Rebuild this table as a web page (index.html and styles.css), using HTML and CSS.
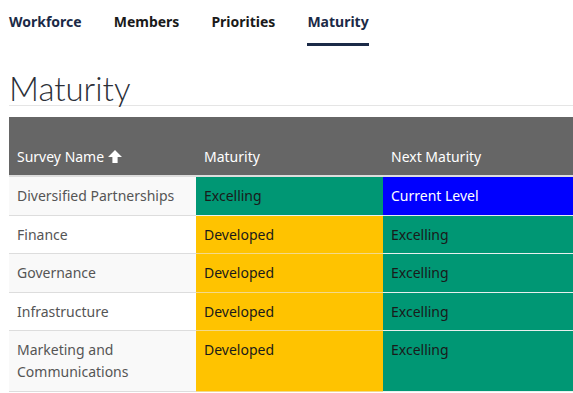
FILE: index.html
```html
<!DOCTYPE html>
<html lang="en">
<head>
    <meta charset="UTF-8">
    <meta name="viewport" content="width=device-width, initial-scale=1.0">
    <title>Maturity</title>
    <link rel="stylesheet" href="styles.css">
</head>
<body>
    <div class="page">
        <!-- Navegação -->
        <nav class="tabs">
            <a href="#">Workforce</a>
            <a href="#">Members</a>
            <a href="#">Priorities</a>
            <a href="#" class="active">Maturity</a>
        </nav>

        <h1>Maturity</h1>

        <table class="maturity-table">
            <thead>
                <tr>
                    <th class="col-name">Survey Name <svg class="sort-icon" viewBox="0 0 14 13" width="14" height="13"><path d="M7 0 L14 7 L9.6 7 L9.6 13 L4.4 13 L4.4 7 L0 7 Z" fill="#fff"/></svg></th>
                    <th class="col-level">Maturity</th>
                    <th>Next Maturity</th>
                </tr>
            </thead>
            <tbody>
                <tr>
                    <td class="name">Diversified Partnerships</td>
                    <td class="excelling">Excelling</td>
                    <td class="current">Current Level</td>
                </tr>
                <tr>
                    <td class="name">Finance</td>
                    <td class="developed">Developed</td>
                    <td class="excelling">Excelling</td>
                </tr>
                <tr>
                    <td class="name">Governance</td>
                    <td class="developed">Developed</td>
                    <td class="excelling">Excelling</td>
                </tr>
                <tr>
                    <td class="name">Infrastructure</td>
                    <td class="developed">Developed</td>
                    <td class="excelling">Excelling</td>
                </tr>
                <tr>
                    <td class="name">Marketing and Communications</td>
                    <td class="developed">Developed</td>
                    <td class="excelling">Excelling</td>
                </tr>
            </tbody>
        </table>
    </div>
</body>
</html>
```

FILE: styles.css
```css
* {
    margin: 0;
    padding: 0;
    box-sizing: border-box;
}

body {
    font-family: 'Noto Sans', 'Open Sans', sans-serif;
    background: #fff;
    color: #333;
    overflow: hidden;
}

.page {
    padding: 9px 0 0 9px;
}

/* Abas */
.tabs {
    display: flex;
    gap: 32px;
}

.tabs a {
    font-size: 14px;
    font-weight: 700;
    color: #1a1a1a;
    text-decoration: none;
    line-height: 26px;
    padding-bottom: 8px;
    border-bottom: 3px solid transparent;
}

.tabs a:first-child {
    color: #1b2a47;
}

.tabs a.active {
    color: #1b2a47;
    border-bottom-color: #1b2a47;
}

h1 {
    font-family: 'Lato', 'Noto Sans', sans-serif;
    font-size: 33px;
    font-weight: 300;
    color: #2b2f38;
    line-height: 32px;
    margin-top: 26px;
    padding-bottom: 1px;
    border-bottom: 1px solid #e5e5e5;
    margin-bottom: 11px;
}

/* Tabela */
.maturity-table {
    border-collapse: collapse;
    width: 564px;
    table-layout: fixed;
    font-size: 14px;
}

.maturity-table th {
    background: #666;
    color: #fff;
    font-weight: 400;
    text-align: left;
    vertical-align: bottom;
    height: 59px;
    padding: 0 8px 7px;
    line-height: 22px;
    border-bottom: 2px solid #ddd;
}

.maturity-table th.col-name {
    width: 187px;
}

.maturity-table th.col-level {
    width: 187px;
}

.sort-icon {
    vertical-align: -1px;
}

.maturity-table td {
    padding: 8px 8px 7.5px;
    line-height: 22px;
    vertical-align: top;
    border-bottom: 1px solid #ddd;
    color: #1a1a1a;
}

.maturity-table td.name {
    color: #555;
}

.maturity-table tbody tr:nth-child(odd) td.name {
    background: #f9f9f9;
}

.maturity-table td.excelling {
    background: #009774;
    border-bottom-color: #e8f0ee;
}

.maturity-table td.developed {
    background: #ffc300;
    border-bottom-color: #f3d98a;
}

.maturity-table td.current {
    background: #0000ff;
    color: #fff;
    border-bottom-color: #e8e8f0;
}
```
